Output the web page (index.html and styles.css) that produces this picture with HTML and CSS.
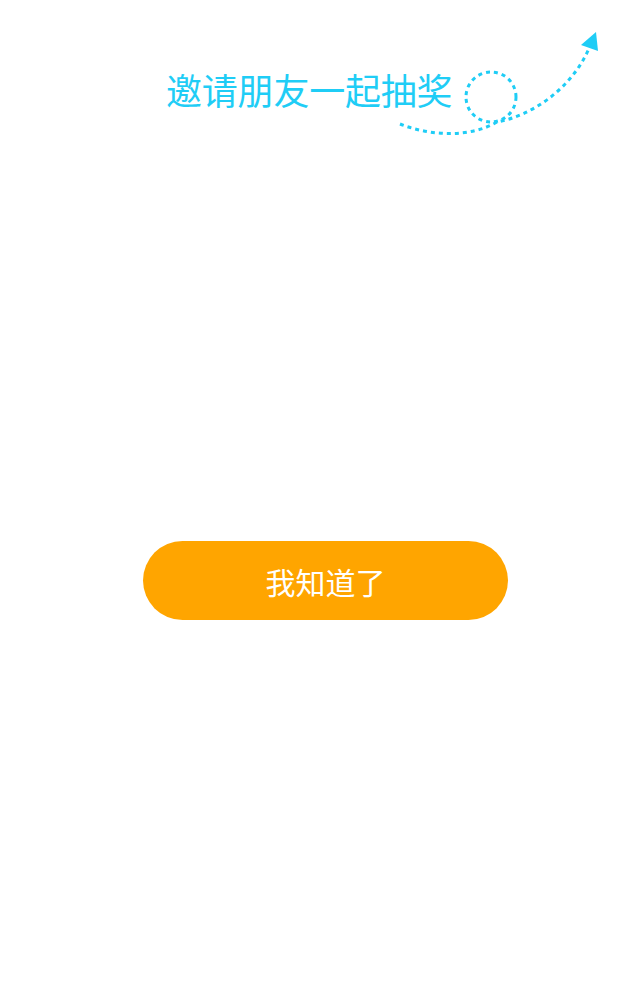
FILE: index.html
```html
<!DOCTYPE html>
<html lang="zh">
<head>
<meta charset="utf-8">
<title>邀请朋友一起抽奖</title>
<link rel="stylesheet" href="styles.css">
</head>
<body>
<div class="page">
  <header class="hint">
    <h1 class="hint-title">邀请朋友一起抽奖</h1>
    <svg class="hint-arrow" width="640" height="150" viewBox="0 0 640 150" aria-hidden="true">
      <path d="M400,124 C430,136 470,138 497,122 C530,116 572,90 590,46" fill="none" stroke="#1fcdf6" stroke-width="3" stroke-dasharray="4 4"/>
      <circle cx="491" cy="97" r="25" fill="none" stroke="#1fcdf6" stroke-width="3" stroke-dasharray="4 4"/>
      <polygon points="581,45 596,32 598,51" fill="#1fcdf6"/>
    </svg>
  </header>
  <div class="actions">
    <button class="btn-ok" type="button">我知道了</button>
  </div>
</div>
</body>
</html>
```

FILE: styles.css
```css
html, body {
  margin: 0;
  padding: 0;
  background: #ffffff;
}

.page {
  width: 640px;
  height: 1008px;
  font-family: "Noto Sans CJK SC", "Noto Sans", sans-serif;
  display: flex;
  flex-direction: column;
}

.hint {
  position: relative;
  height: 150px;
}

.hint-title {
  margin: 0;
  padding: 65px 0 0 166px;
  font-size: 36px;
  font-weight: 400;
  line-height: 48px;
  color: #1fcdf6;
  letter-spacing: -0.2px;
}

.hint-arrow {
  position: absolute;
  left: 0;
  top: 0;
}

.actions {
  display: flex;
  justify-content: flex-start;
  padding: 391px 0 0 143px;
}

.btn-ok {
  width: 365px;
  height: 79px;
  border: 0;
  border-radius: 40px;
  background: #ffa500;
  color: #ffffff;
  font-family: "Noto Sans CJK SC", "Noto Sans", sans-serif;
  font-size: 30px;
  line-height: 1;
  padding: 0;
  letter-spacing: 0;
}
```
